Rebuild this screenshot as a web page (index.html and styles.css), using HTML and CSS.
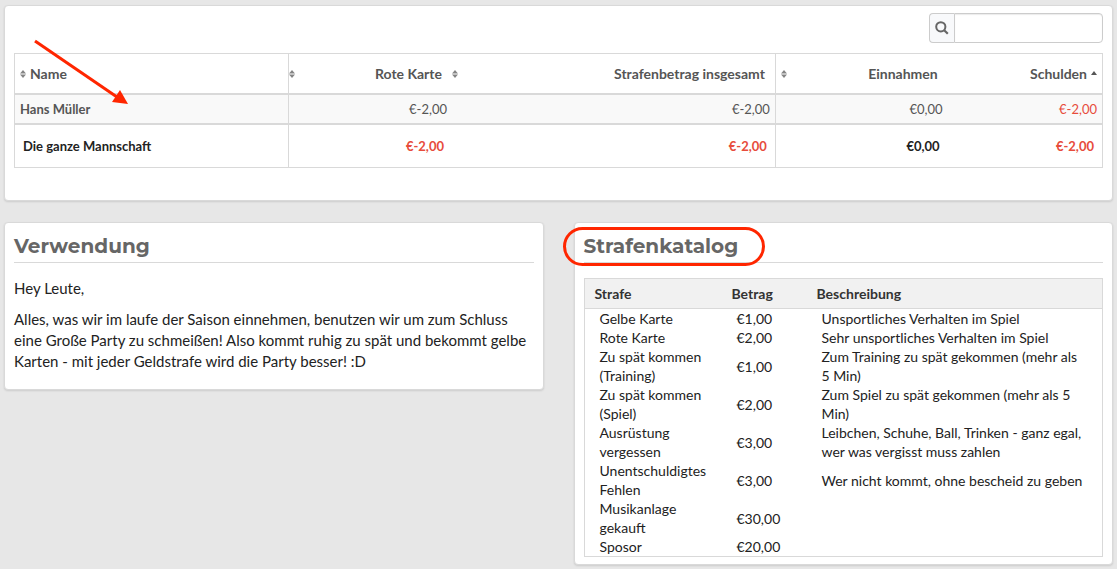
FILE: index.html
```html
<!DOCTYPE html>
<html lang="de">
<head>
    <meta charset="UTF-8">
    <meta name="viewport" content="width=device-width, initial-scale=1.0">
    <title>Mannschaftskasse</title>
    <link rel="stylesheet" href="styles.css">
</head>
<body>

    <svg class="symbols" aria-hidden="true">
        <symbol id="sort-both" viewBox="0 0 6 8">
            <path d="M3 0L6 3.5H0zM0 4.5H6L3 8z" fill="#858585"/>
        </symbol>
        <symbol id="sort-asc" viewBox="0 0 6 8">
            <path d="M3 1L6 5H0z" fill="#555"/>
        </symbol>
    </svg>

    <section class="card overview">
        <form class="search" role="search">
            <label for="search" aria-label="Suche">
                <svg width="14" height="14" viewBox="0 0 14 14">
                    <circle cx="5.8" cy="5.8" r="4.6" fill="none" stroke="#666" stroke-width="2"/>
                    <path d="M9.2 9.2L12.8 12.8" stroke="#666" stroke-width="2.2"/>
                </svg>
            </label>
            <input type="text" id="search">
        </form>

        <table class="balance">
            <colgroup>
                <col class="col-name">
                <col class="col-card">
                <col class="col-total">
                <col class="col-income">
                <col class="col-debt">
            </colgroup>
            <thead>
                <tr>
                    <th class="name line"><button class="sort"><svg><use href="#sort-both"/></svg>Name</button></th>
                    <th><button class="sort spread tight"><svg><use href="#sort-both"/></svg>Rote Karte</button></th>
                    <th class="line"><button class="sort spread tight"><svg><use href="#sort-both"/></svg>Strafenbetrag insgesamt</button></th>
                    <th><button class="sort spread"><svg><use href="#sort-both"/></svg>Einnahmen</button></th>
                    <th><button class="sort active">Schulden<svg><use href="#sort-asc"/></svg></button></th>
                </tr>
            </thead>
            <tbody>
                <tr>
                    <td class="name line">Hans Müller</td>
                    <td>€-2,00</td>
                    <td class="line">€-2,00</td>
                    <td>€0,00</td>
                    <td class="negative">€-2,00</td>
                </tr>
            </tbody>
            <tfoot>
                <tr>
                    <td class="name line">Die ganze Mannschaft</td>
                    <td class="negative">€-2,00</td>
                    <td class="negative line">€-2,00</td>
                    <td>€0,00</td>
                    <td class="negative">€-2,00</td>
                </tr>
            </tfoot>
        </table>

        <svg class="arrow" width="98" height="68" viewBox="0 0 98 68" aria-hidden="true">
            <path d="M2 2L84 58" stroke="#ff2600" stroke-width="3"/>
            <path d="M95 65L79 63L87 51z" fill="#ff2600"/>
        </svg>
    </section>

    <div class="columns">
        <section class="card">
            <h2>Verwendung</h2>
            <p>Hey Leute,</p>
            <p>Alles, was wir im laufe der Saison einnehmen, benutzen wir um zum Schluss eine Große Party zu schmeißen! Also kommt ruhig zu spät und bekommt gelbe Karten - mit jeder Geldstrafe wird die Party besser! :D</p>
        </section>

        <section class="card">
            <h2><span class="circled">Strafenkatalog</span></h2>
            <table class="catalog">
                <colgroup>
                    <col class="col-penalty">
                    <col class="col-amount">
                    <col>
                </colgroup>
                <thead>
                    <tr><th>Strafe</th><th>Betrag</th><th>Beschreibung</th></tr>
                </thead>
                <tbody>
                    <tr><td>Gelbe Karte</td><td>€1,00</td><td>Unsportliches Verhalten im Spiel</td></tr>
                    <tr><td>Rote Karte</td><td>€2,00</td><td>Sehr unsportliches Verhalten im Spiel</td></tr>
                    <tr><td>Zu spät kommen (Training)</td><td>€1,00</td><td>Zum Training zu spät gekommen (mehr als 5 Min)</td></tr>
                    <tr><td>Zu spät kommen (Spiel)</td><td>€2,00</td><td>Zum Spiel zu spät gekommen (mehr als 5 Min)</td></tr>
                    <tr><td>Ausrüstung vergessen</td><td>€3,00</td><td>Leibchen, Schuhe, Ball, Trinken - ganz egal, wer was vergisst muss zahlen</td></tr>
                    <tr><td>Unentschuldigtes Fehlen</td><td>€3,00</td><td>Wer nicht kommt, ohne bescheid zu geben</td></tr>
                    <tr><td>Musikanlage gekauft</td><td>€30,00</td><td></td></tr>
                    <tr><td>Sposor</td><td>€20,00</td><td></td></tr>
                </tbody>
            </table>
        </section>
    </div>

</body>
</html>
```
FILE: styles.css
```css
* {
    box-sizing: border-box;
}
body {
    margin: 0;
    padding: 5px 4px 4px;
    background-color: #e7e7e7;
    color: #222;
    font-family: Lato, "Liberation Sans", sans-serif;
    font-size: 15px;
    line-height: 21px;
}
.symbols {
    display: none;
}
.card {
    position: relative;
    padding: 7px 9px;
    background-color: #fff;
    border: 1px solid #d9d9d9;
    border-radius: 4px;
    box-shadow: 0 1px 2px rgba(0, 0, 0, 0.12);
}
.overview {
    padding-bottom: 32px;
    margin-bottom: 21px;
}
.columns {
    display: grid;
    grid-template-columns: 1fr 1fr;
    gap: 30px;
    align-items: start;
}

/* Search box */
.search {
    display: flex;
    justify-content: flex-end;
    margin-bottom: 10px;
}
.search label {
    display: flex;
    align-items: center;
    justify-content: center;
    width: 25px;
    height: 30px;
    background-color: #f8f9fb;
    border: 1px solid #ccc;
    border-right: none;
    border-radius: 4px 0 0 4px;
}
.search input {
    width: 149px;
    height: 30px;
    padding: 4px 6px;
    font: inherit;
    background-color: #fff;
    border: 1px solid #ccc;
    border-radius: 0 4px 4px 0;
    box-shadow: inset 0 1px 1px rgba(0, 0, 0, 0.08);
}

/* Tables */
table {
    width: 100%;
    table-layout: fixed;
    border-collapse: separate;
    border-spacing: 0;
    border: 1px solid #d9d9d9;
    font-size: 14px;
}
.balance {
    color: #555;
    line-height: 20px;
}
.col-name { width: 25.2%; }
.col-card { width: 15%; }
.col-total { width: 29.8%; }
.col-income { width: 15.8%; }
.col-debt { width: 14.2%; }
.balance th {
    height: 41px;
    padding: 0;
    border-bottom: 2px solid #d9d9d9;
}
.balance td {
    height: 30px;
    padding: 0 5px;
    font-size: 13px;
    text-align: right;
}
.balance tbody td {
    background-color: #f9f9f9;
    border-bottom: 2px solid #d9d9d9;
}
.balance tfoot td {
    height: 42px;
    padding: 0 8px;
    color: #222;
    font-weight: bold;
}
.balance .name {
    text-align: left;
    font-weight: bold;
}
.balance .line {
    border-right: 1px solid #d9d9d9;
}
.balance td.negative {
    color: #e74c3c;
}
.sort {
    display: flex;
    align-items: center;
    gap: 4px;
    width: 100%;
    padding: 0 10px 0 5px;
    background: none;
    border: none;
    color: inherit;
    font: inherit;
    cursor: pointer;
}
.sort svg {
    width: 6px;
    height: 8px;
}
.sort.spread {
    justify-content: space-between;
}
.sort.tight {
    padding-left: 0;
}
.sort.active {
    justify-content: flex-end;
    padding-right: 5px;
}
.catalog {
    line-height: 19px;
}
.col-penalty { width: 137px; }
.col-amount { width: 85px; }
.catalog th {
    height: 30px;
    padding: 0 10px;
    background-color: #f1f1f1;
    border-bottom: 1px solid #d9d9d9;
    color: #333;
    text-align: left;
}
.catalog td {
    padding: 0 15px;
}

/* Text */
h2 {
    margin: 0 0 15px;
    padding: 4px 0;
    border-bottom: 1px solid #d9d9d9;
    color: #666;
    font-family: Montserrat, Inter, sans-serif;
    font-size: 20px;
    font-weight: 700;
    line-height: 24px;
}
p {
    margin: 0 0 10px;
}

/* Red markers */
.arrow {
    position: absolute;
    left: 28px;
    top: 33px;
    pointer-events: none;
}
.circled {
    position: relative;
}
.circled::after {
    content: "";
    position: absolute;
    inset: -7px -27px -8px -21px;
    border: 3px solid #ff2600;
    border-radius: 20px;
}
```
